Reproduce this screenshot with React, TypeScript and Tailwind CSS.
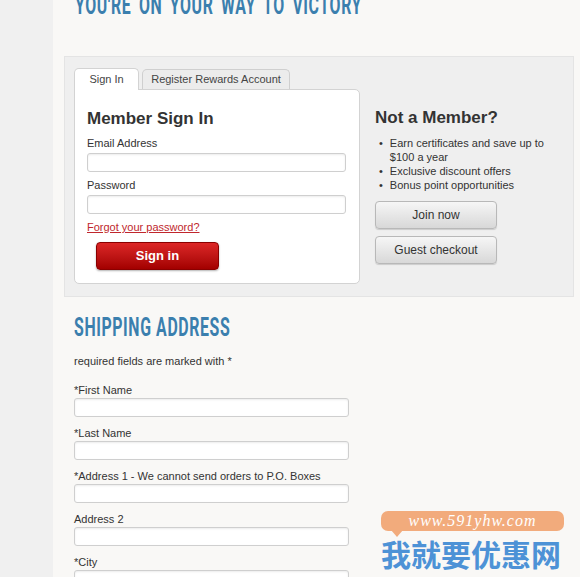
import React from "react";

const sans = { fontFamily: '"Liberation Sans", Arial, sans-serif' };
const headFont = { fontFamily: "Roboto, sans-serif" };

// simple labelled text field used by both forms
const Field = ({ label, width, gap }: { label: string; width: string; gap: string }) => (
  <div className="flex flex-col">
    <span className="text-[11px] leading-[14px] text-[#333]">{label}</span>
    <div
      className={`${width} ${gap} h-[19px] bg-white border border-[#cfcfcf] rounded-[3px] shadow-[inset_0_1px_2px_rgba(0,0,0,0.08)]`}
    />
  </div>
);

const GrayButton = ({ text }: { text: string }) => (
  <button className="w-[122px] h-[28px] rounded-[4px] border border-[#b8b8b8] bg-gradient-to-b from-[#f6f6f6] to-[#d8d8d8] text-[12px] text-[#333] shadow-[0_1px_1px_rgba(0,0,0,0.15)]">
    {text}
  </button>
);

const App = () => {
  return (
    <div className="w-[580px] h-[577px] overflow-hidden flex relative" style={sans}>
      <div className="w-[53px] bg-[#f0f0f0] shrink-0" />
      <div className="flex-1 bg-[#f9f8f6] relative">
        <div className="absolute left-[22px] top-[-8px] origin-left scale-x-[0.61] whitespace-nowrap text-[26px] leading-none font-bold tracking-[1px] [word-spacing:5px] text-[#3b7fae]" style={headFont}>
          YOU'RE ON YOUR WAY TO VICTORY
        </div>

        {/* sign in band */}
        <div className="mt-[56px] ml-[11px] mr-[6px] h-[241px] bg-[#efefef] border border-[#e4e4e4] pl-[9px] pt-[10px] flex gap-[15px]">
          <div className="flex flex-col">
            <div className="flex items-end gap-[3px] h-[22px]">
              <div className="w-[65px] h-[22px] bg-white border border-b-0 border-[#d3d3d3] rounded-t-[5px] text-[11px] text-[#444] flex items-center justify-center relative z-10 -mb-px">
                Sign In
              </div>
              <div className="w-[148px] h-[20px] bg-[#ececec] border border-b-0 border-[#cfcfcf] rounded-t-[5px] text-[11px] text-[#444] flex items-center justify-center">
                Register Rewards Account
              </div>
            </div>
            <div className="w-[286px] h-[195px] bg-white border border-[#d3d3d3] rounded-[5px] rounded-tl-none pl-[12px] pt-[19px] flex flex-col">
              <div className="text-[17px] leading-[20px] font-bold text-[#333]">Member Sign In</div>
              <div className="mt-[7px]">
                <Field label="Email Address" width="w-[259px]" gap="mt-[3px]" />
              </div>
              <div className="mt-[6px]">
                <Field label="Password" width="w-[259px]" gap="mt-[3px]" />
              </div>
              <a className="mt-[6px] text-[11px] leading-[14px] text-[#c0272d] underline">Forgot your password?</a>
              <button className="mt-[8px] ml-[9px] w-[123px] h-[28px] rounded-[4px] border border-[#8a0000] bg-gradient-to-b from-[#dc2626] to-[#a30000] text-white text-[13px] font-bold shadow-[0_1px_2px_rgba(0,0,0,0.3)]">
                Sign in
              </button>
            </div>
          </div>

          <div className="flex flex-col pt-[41px]">
            <div className="text-[17px] leading-[20px] font-bold text-[#333]">Not a Member?</div>
            <ul className="mt-[8px] pl-[4px] text-[11px] leading-[14px] text-[#333]">
              <li className="flex gap-[7px]"><span>•</span><span>Earn certificates and save up to<br />$100 a year</span></li>
              <li className="flex gap-[7px]"><span>•</span><span>Exclusive discount offers</span></li>
              <li className="flex gap-[7px]"><span>•</span><span>Bonus point opportunities</span></li>
            </ul>
            <div className="mt-[9px] flex flex-col gap-[7px]">
              <GrayButton text="Join now" />
              <GrayButton text="Guest checkout" />
            </div>
          </div>
        </div>

        {/* shipping */}
        <div className="pl-[21px] pt-[17px] flex flex-col">
          <div className="h-[26px] relative">
            <div className="absolute left-0 top-0 origin-left scale-x-[0.61] whitespace-nowrap text-[26px] leading-none font-bold tracking-[1px] text-[#3b7fae]" style={headFont}>
              SHIPPING ADDRESS
            </div>
          </div>
          <div className="mt-[14px] text-[11px] leading-[14px] text-[#333]">required fields are marked with *</div>
          <div className="mt-[15px] flex flex-col gap-[9px]">
            <Field label="*First Name" width="w-[275px]" gap="mt-[1px]" />
            <Field label="*Last Name" width="w-[275px]" gap="mt-[1px]" />
            <Field label="*Address 1 - We cannot send orders to P.O. Boxes" width="w-[275px]" gap="mt-[1px]" />
            <Field label="Address 2" width="w-[275px]" gap="mt-[1px]" />
            <Field label="*City" width="w-[275px]" gap="mt-[1px]" />
          </div>
        </div>
      </div>

      {/* watermark */}
      <div className="absolute left-[381px] top-[511px] flex flex-col items-start">
        <div className="relative w-[183px] h-[20px] rounded-[7px] bg-[#f2ab7c] flex items-center justify-center">
          <span className="text-white italic text-[16px] tracking-[1px]" style={{ fontFamily: '"Liberation Serif", serif' }}>
            www.591yhw.com
          </span>
          <div className="absolute left-[10px] bottom-[-6px] w-0 h-0 border-l-[6px] border-r-[6px] border-t-[7px] border-l-transparent border-r-transparent border-t-[#f2ab7c]" />
        </div>
        <div className="mt-[6px] text-[30px] leading-[32px] font-bold text-[#4d92d6]" style={{ fontFamily: '"Noto Sans CJK SC", sans-serif' }}>
          我就要优惠网
        </div>
      </div>
    </div>
  );
};

export default App;
